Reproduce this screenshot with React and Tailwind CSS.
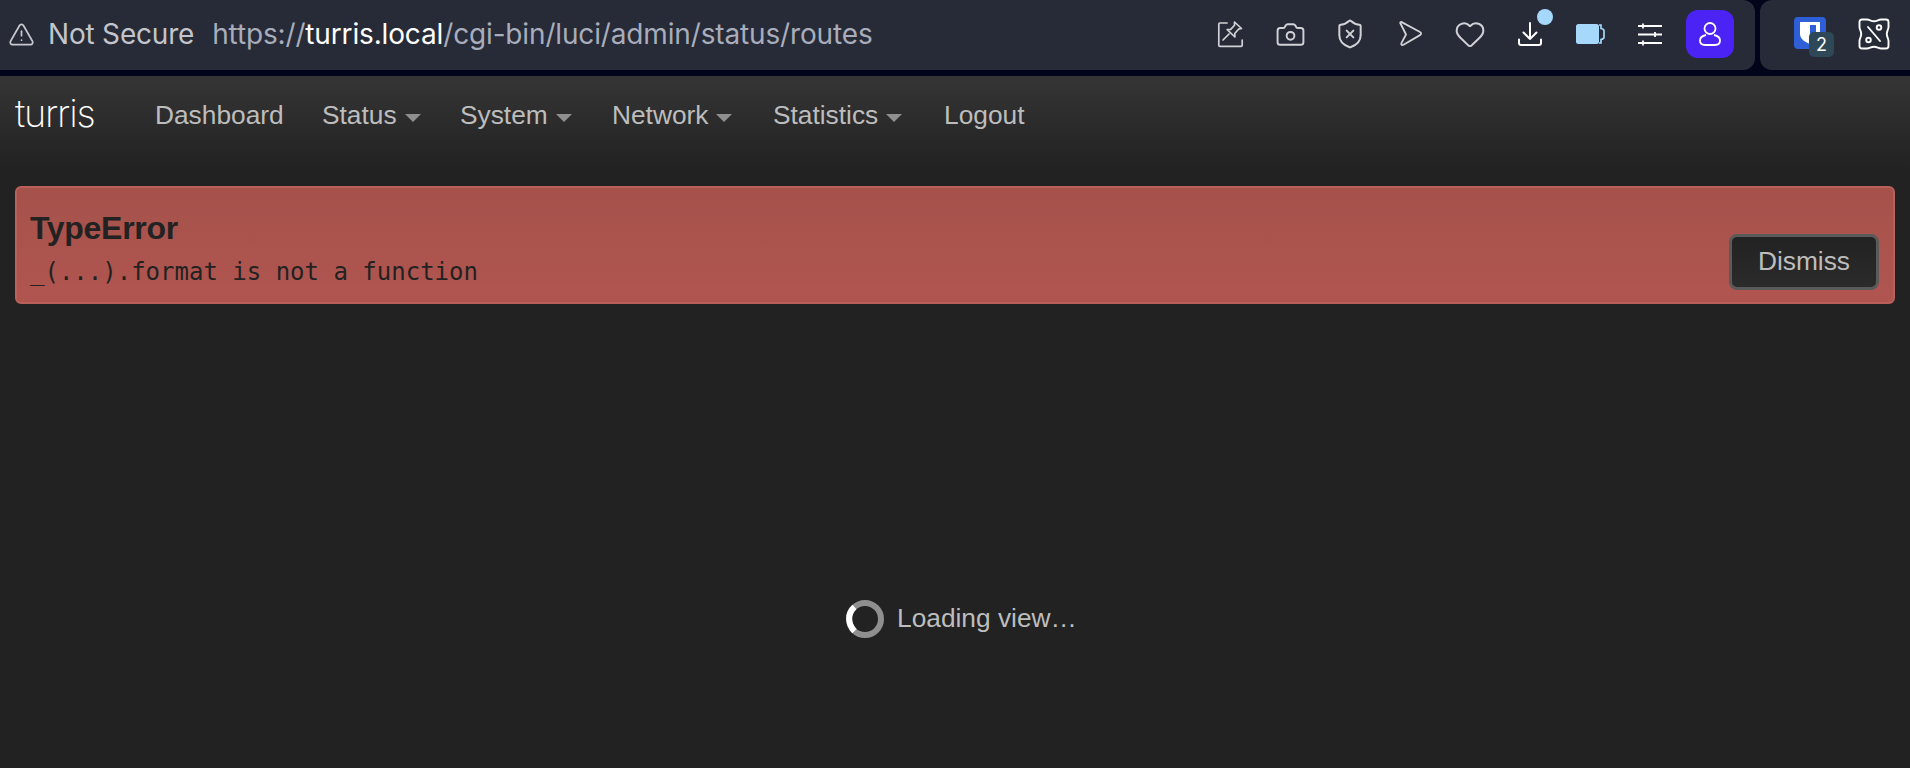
import { TriangleAlert, Camera, ShieldX, Heart } from 'lucide-react'

const navItems = [
  { label: 'Dashboard', width: 'w-[167px]' },
  { label: 'Status', width: 'w-[138px]', caret: true },
  { label: 'System', width: 'w-[152px]', caret: true },
  { label: 'Network', width: 'w-[161px]', caret: true },
  { label: 'Statistics', width: 'w-[171px]', caret: true },
  { label: 'Logout', width: 'w-[90px]' },
]

function PinIcon() {
  return (
    <svg width="28" height="28" viewBox="0 0 28 28" fill="none" stroke="currentColor" strokeWidth="1.700" strokeLinecap="round" strokeLinejoin="round">
      <path d="M11 3H4a1.200 1.200 0 0 0-1.200 1.200v21c0 .7.5 1.200 1.200 1.200h21c.7 0 1.200-.5 1.200-1.200V20" />
      <path d="M18.500 2l7 6.500-3 .7-3.700 4.300.1 3.500-7.700-7.300 3.500-.3 3.800-4.200z" />
      <path d="M13 14l-6 6" />
    </svg>
  )
}

function SendIcon() {
  return (
    <svg width="26" height="28" viewBox="0 0 26 28" fill="none" stroke="currentColor" strokeWidth="1.800" strokeLinejoin="round">
      <path d="M3.500 3.500c-.8-.8 0-1.800 1.200-1.400L23 12c1.500.9 1.500 2.300 0 3.100L6.500 24.800c-1.400.8-2.800-.4-2.100-1.700L9 14.500 3.500 3.500z" />
    </svg>
  )
}

function TrayDownloadIcon() {
  return (
    <svg width="26" height="26" viewBox="0 0 26 26" fill="none" stroke="white" strokeWidth="2" strokeLinecap="round" strokeLinejoin="round">
      <path d="M13 2v16M6.500 11.500L13 18l6.500-6.500" />
      <path d="M2 18.500v3.500c0 1.300.7 2 2 2h18c1.300 0 2-.7 2-2v-3.500" />
    </svg>
  )
}

function BatteryIcon() {
  return (
    <svg width="30" height="22" viewBox="0 0 30 22">
      <rect x="1" y="1" width="23" height="20" rx="2.500" fill="#a6d8fb" />
      <path d="M24 2h2v3.500c2 .3 3 1 3 2.500v6c0 1.500-1 2.200-3 2.500V20h-2" fill="none" stroke="#a6d8fb" strokeWidth="1.700" />
    </svg>
  )
}

function TuneIcon() {
  return (
    <svg width="26" height="24" viewBox="0 0 26 24" fill="none" stroke="white" strokeWidth="2">
      <path d="M1 4h24M1 12.500h24M1 21h24" />
      <path d="M6 1.500v5M18 10v5M6 18.500v5" strokeWidth="1.800" />
    </svg>
  )
}

function PersonIcon() {
  return (
    <svg width="24" height="26" viewBox="0 0 24 26" fill="none" stroke="white" strokeWidth="1.800">
      <circle cx="12" cy="7.500" r="5.500" />
      <path d="M8 14c-4 .8-6 3-6 5.500 0 3 2 4.500 5 4.500h10c3 0 5-1.500 5-4.500 0-2.500-2-4.700-6-5.500" />
    </svg>
  )
}

function BitwardenIcon() {
  return (
    <div className="relative w-[42px] h-[40px] mt-[6px]">
      <svg width="32" height="32" viewBox="0 0 32 32" className="absolute left-0 top-0">
        <rect width="32" height="32" rx="4" fill="#2f5fd6" />
        <path d="M6 5h20v12c0 5-5 8-10 10-5-2-10-5-10-10V5z" fill="white" />
        <path d="M16 8h6v9c0 3-3 5-6 6.500V8z" fill="#2f5fd6" />
      </svg>
      <div className="absolute left-[15px] top-[15px] w-[25px] h-[25px] rounded-[5px] bg-[#2f4858] text-white text-[18px] leading-[25px] text-center font-['Inter',sans-serif]">2</div>
    </div>
  )
}

function CouponIcon() {
  return (
    <svg width="32" height="32" viewBox="0 0 32 32" fill="none" stroke="white" strokeWidth="1.900" strokeLinecap="round" strokeLinejoin="round">
      <path d="M4 1.500H9C11.500 1.500 13 3.200 16 3.200S20.500 1.500 23 1.500H28Q30.500 1.500 30.500 4V9C30.500 11.500 28.800 13 28.800 16S30.500 20.500 30.500 23V28Q30.500 30.500 28 30.500H23C20.500 30.500 19 28.800 16 28.800S11.500 30.500 9 30.500H4Q1.500 30.500 1.500 28V23C1.500 20.500 3.200 19 3.200 16S1.500 11.500 1.500 9V4Q1.500 1.500 4 1.500Z" />
      <path d="M10 9l12 14" />
      <circle cx="21" cy="9.500" r="2.300" />
      <circle cx="10.500" cy="22" r="2.300" />
    </svg>
  )
}

function Spinner() {
  return (
    <svg width="38" height="38" viewBox="0 0 38 38" fill="none" strokeWidth="6">
      <circle cx="19" cy="19" r="16" stroke="#8f8f8f" />
      <path d="M8.500 6.900C1.500 13 1.300 23.500 8.500 31.100" stroke="#ffffff" />
    </svg>
  )
}

export default function App() {
  return (
    <div className="h-[768px] bg-[#222222] flex flex-col font-['Liberation_Sans',sans-serif] overflow-hidden">
      {/* Browser toolbar */}
      <div className="h-[70px] bg-[#02041a] flex shrink-0 gap-[5px]">
        <div className="w-[1755px] bg-[#272a37] rounded-r-[12px] flex items-center pl-[8px] pr-[21px] pb-[2px] text-[#d1d2d6] font-['Inter',sans-serif]">
          <TriangleAlert size={27} strokeWidth={1.500} className="text-[#c8c9cd]" />
          <span className="ml-[13px] text-[28px] tracking-[-0.2px] text-[#c3c5ca]">Not Secure</span>
          <span className="ml-[18px] text-[28px] tracking-[-0.15px] text-[#a8adbb]">
            https://<span className="text-white">turris.local</span>/cgi-bin/luci/admin/status/routes
          </span>
          <div className="ml-auto flex items-center">
            <div className="w-[60px] flex justify-center"><PinIcon /></div>
            <div className="w-[60px] flex justify-center"><Camera size={31} strokeWidth={1.500} /></div>
            <div className="w-[60px] flex justify-center"><ShieldX size={32} strokeWidth={1.500} /></div>
            <div className="w-[60px] flex justify-center"><SendIcon /></div>
            <div className="w-[60px] flex justify-center"><Heart size={32} strokeWidth={1.500} /></div>
            <div className="w-[60px] flex justify-center relative">
              <TrayDownloadIcon />
              <span className="absolute right-[7px] top-[-12px] w-[16px] h-[16px] rounded-full bg-[#a6d8fb]" />
            </div>
            <div className="w-[60px] flex justify-center"><BatteryIcon /></div>
            <div className="w-[60px] flex justify-center"><TuneIcon /></div>
            <div className="ml-[6px] w-[48px] h-[48px] rounded-[12px] bg-[#4c23f5] flex items-center justify-center"><PersonIcon /></div>
          </div>
        </div>
        <div className="flex-1 bg-[#272a37] rounded-l-[12px] flex items-center pl-[34px] pb-[2px] gap-[22px]">
          <BitwardenIcon />
          <CouponIcon />
        </div>
      </div>
      <div className="h-[6px] bg-[#02041a] shrink-0" />

      {/* LuCI navbar */}
      <nav className="h-[94px] shrink-0 flex items-center pl-[15px] pb-[14px] bg-gradient-to-b from-[#353535] to-[#222222]">
        <span className="w-[140px] text-[38px] leading-none font-['Inter',sans-serif] font-extralight tracking-[-1.200px] text-white -mt-[6px]">turris</span>
        {navItems.map(({ label, width, caret }) => (
          <div key={label} className={`${width} flex items-center text-[26.300px] text-[#bdbdbd]`}>
            {label}
            {caret && <span className="ml-[8px] mt-[3px] w-0 h-0 border-x-[8px] border-x-transparent border-t-[8px] border-t-[#8f8f8f]" />}
          </div>
        ))}
      </nav>

      {/* Error alert */}
      <div className="mx-[15px] mt-[16px] h-[118px] shrink-0 rounded-[6px] border-2 border-[#b9605a] bg-gradient-to-b from-[#a5524b] to-[#b15550] flex items-end justify-between pl-[13px] pr-[14px] pb-[12px] text-[#222222]">
        <div>
          <div className="text-[32px] leading-[38px] font-bold tracking-[-0.3px]">TypeError</div>
          <div className="text-[24px] leading-[36px] mt-[7px] font-['DejaVu_Sans_Mono',monospace]">_(...).format is not a function</div>
        </div>
        <button className="w-[150px] h-[56px] rounded-[8px] border-[3px] border-[#5a5a5a] bg-gradient-to-b from-[#222222] to-[#2b2b2b] text-[26.300px] text-[#bdbdbd]">Dismiss</button>
      </div>

      {/* Loading */}
      <div className="mt-[295px] ml-[846px] flex items-center gap-[13px] text-[26.300px] text-[#bdbdbd]">
        <Spinner />
        <span>Loading view…</span>
      </div>
    </div>
  )
}
